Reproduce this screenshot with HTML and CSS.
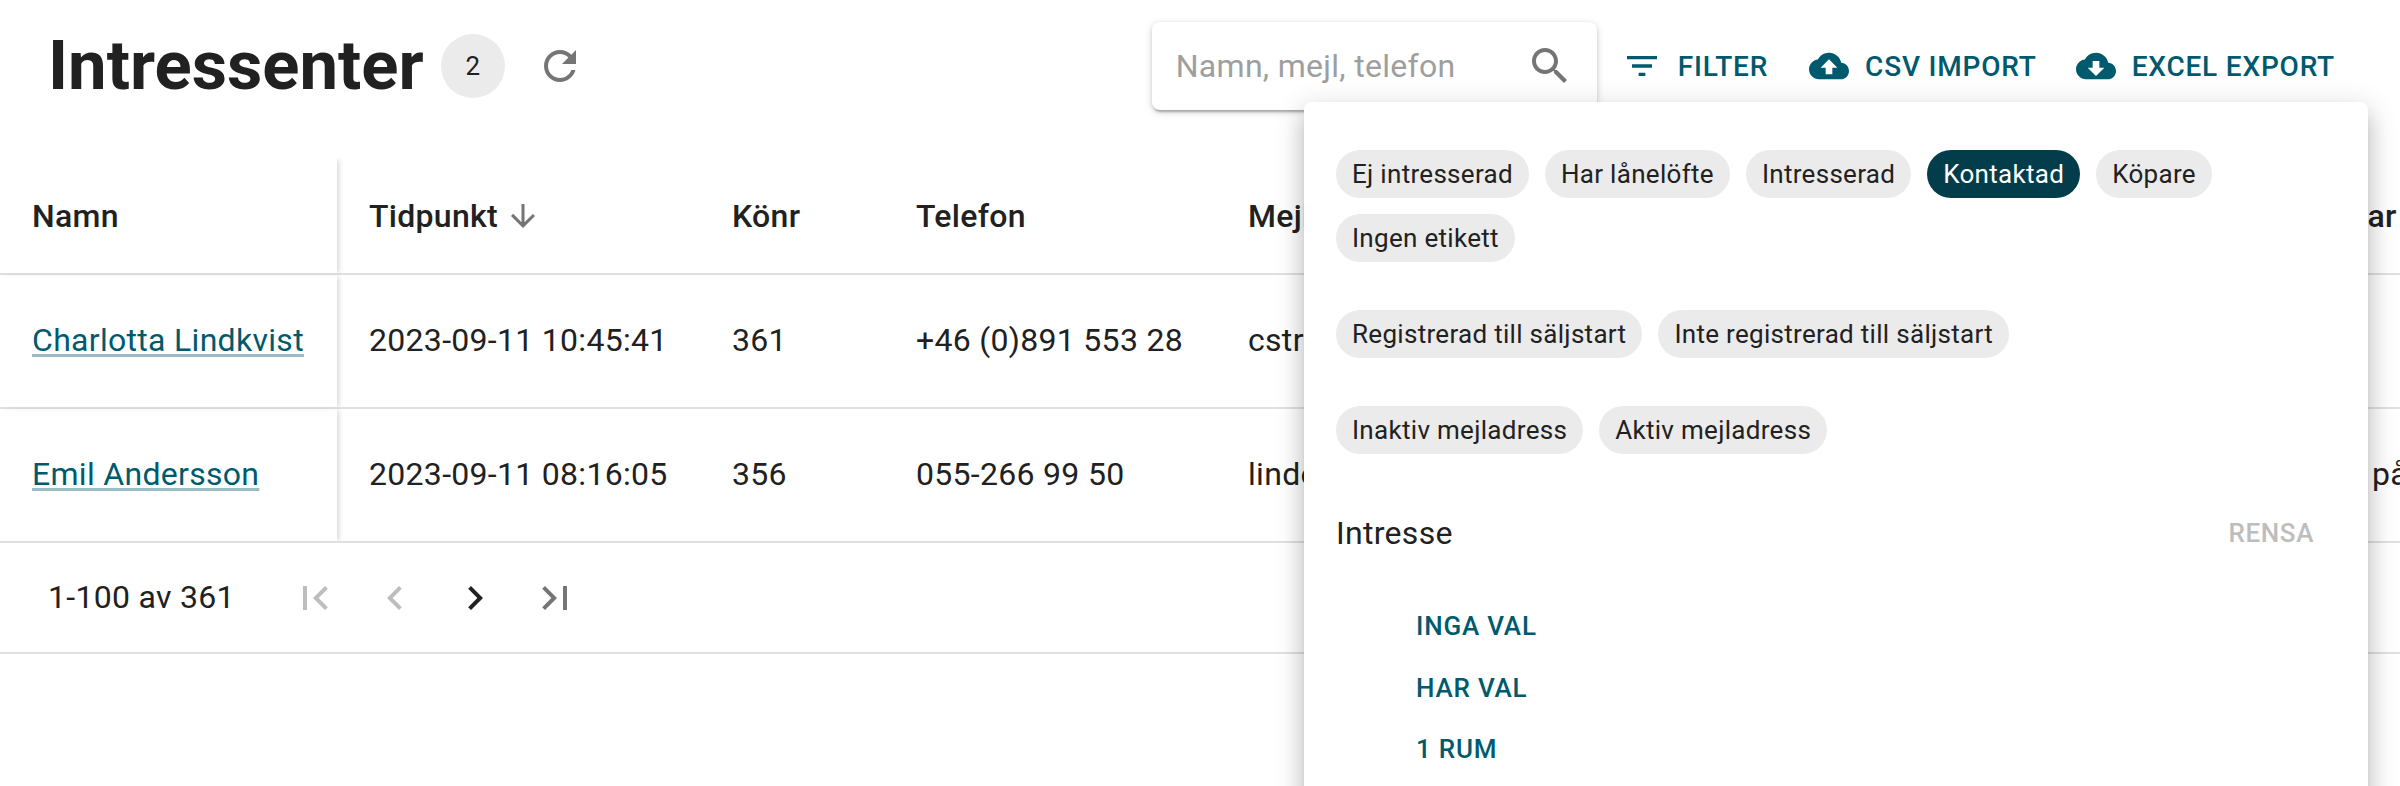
FILE: index.html
```html
<!DOCTYPE html>
<html lang="sv">
<head>
<meta charset="utf-8">
<title>Intressenter</title>
<link rel="stylesheet" href="styles.css">
</head>
<body>
<div class="page">
  <header class="toolbar">
    <h1 class="title">Intressenter</h1>
    <span class="count">2</span>
    <svg class="icon refresh" viewBox="0 0 24 24"><path d="M17.65 6.35C16.2 4.9 14.21 4 12 4c-4.42 0-7.99 3.58-7.99 8s3.57 8 7.99 8c3.73 0 6.84-2.55 7.73-6h-2.08c-.82 2.33-3.04 4-5.65 4-3.31 0-6-2.69-6-6s2.69-6 6-6c1.66 0 3.14.69 4.22 1.78L13 11h7V4l-2.35 2.35z"/></svg>
    <div class="actions">
      <div class="search">
        <span class="placeholder">Namn, mejl, telefon</span>
        <svg class="icon search-icon" viewBox="0 0 24 24"><path d="M15.5 14h-.79l-.28-.27C15.41 12.59 16 11.11 16 9.5 16 5.91 13.09 3 9.5 3S3 5.91 3 9.5 5.91 16 9.5 16c1.61 0 3.09-.59 4.23-1.57l.27.28v.79l5 4.99L20.49 19l-4.99-5zm-6 0C7.01 14 5 11.99 5 9.5S7.01 5 9.5 5 14 7.01 14 9.5 11.99 14 9.5 14z"/></svg>
      </div>
      <div class="btn btn-filter">
        <svg class="btn-icon" viewBox="0 0 24 24"><path d="M10 18h4v-2h-4v2zM3 6v2h18V6H3zm3 7h12v-2H6v2z"/></svg>
        <span>FILTER</span>
      </div>
      <div class="btn btn-csv">
        <svg class="btn-icon" viewBox="0 0 24 24"><path d="M19.35 10.04C18.67 6.59 15.64 4 12 4 9.11 4 6.6 5.64 5.35 8.04 2.34 8.36 0 10.91 0 14c0 3.31 2.69 6 6 6h13c2.76 0 5-2.24 5-5 0-2.64-2.05-4.78-4.65-4.96zM14 13v4h-4v-4H7l5-5 5 5h-3z"/></svg>
        <span>CSV IMPORT</span>
      </div>
      <div class="btn btn-excel">
        <svg class="btn-icon" viewBox="0 0 24 24"><path d="M19.35 10.04C18.67 6.59 15.64 4 12 4 9.11 4 6.6 5.64 5.35 8.04 2.34 8.36 0 10.91 0 14c0 3.31 2.69 6 6 6h13c2.76 0 5-2.24 5-5 0-2.64-2.05-4.78-4.65-4.96zM17 13l-5 5-5-5h3V9h4v4h3z"/></svg>
        <span>EXCEL EXPORT</span>
      </div>
    </div>
  </header>

  <div class="table-wrap">
    <table class="table">
      <colgroup>
        <col class="w-name"><col class="w-time"><col class="w-gender"><col class="w-phone"><col class="w-mail"><col class="w-note">
      </colgroup>
      <thead>
        <tr>
          <th class="sticky">Namn</th>
          <th><span class="sort">Tidpunkt<svg class="sort-icon" viewBox="0 0 24 24"><path d="M20 12l-1.41-1.41L13 16.17V4h-2v12.17l-5.58-5.59L4 12l8 8 8-8z"/></svg></span></th>
          <th>Könr</th>
          <th>Telefon</th>
          <th>Mejl</th>
          <th>Kommentar</th>
        </tr>
      </thead>
      <tbody>
        <tr>
          <td class="sticky"><a class="link" href="#">Charlotta Lindkvist</a></td>
          <td>2023-09-11 10:45:41</td>
          <td>361</td>
          <td>+46 (0)891 553 28</td>
          <td>cstrom@example.se</td>
          <td></td>
        </tr>
        <tr>
          <td class="sticky"><a class="link" href="#">Emil Andersson</a></td>
          <td>2023-09-11 08:16:05</td>
          <td>356</td>
          <td>055-266 99 50</td>
          <td>linde@example.se</td>
          <td>Bostaden på Storgatan</td>
        </tr>
      </tbody>
    </table>
  </div>

  <footer class="pager">
    <span class="range">1-100 av 361</span>
    <div class="pager-icons">
      <svg class="icon muted" viewBox="0 0 24 24"><path d="M18.41 16.59 13.82 12l4.59-4.59L17 6l-6 6 6 6zM6 6h2v12H6z"/></svg>
      <svg class="icon muted" viewBox="0 0 24 24"><path d="M15.41 7.41 14 6l-6 6 6 6 1.41-1.41L10.83 12z"/></svg>
      <svg class="icon strong" viewBox="0 0 24 24"><path d="M10 6 8.59 7.41 13.17 12l-4.58 4.59L10 18l6-6z"/></svg>
      <svg class="icon" viewBox="0 0 24 24"><path d="M5.59 7.41 10.18 12l-4.59 4.59L7 18l6-6-6-6zM16 6h2v12h-2z"/></svg>
    </div>
  </footer>

  <aside class="panel">
    <div class="chips">
      <span class="chip">Ej intresserad</span>
      <span class="chip">Har lånelöfte</span>
      <span class="chip">Intresserad</span>
      <span class="chip chip-on">Kontaktad</span>
      <span class="chip">Köpare</span>
      <span class="chip">Ingen etikett</span>
    </div>
    <div class="chips">
      <span class="chip">Registrerad till säljstart</span>
      <span class="chip">Inte registrerad till säljstart</span>
    </div>
    <div class="chips">
      <span class="chip">Inaktiv mejladress</span>
      <span class="chip">Aktiv mejladress</span>
    </div>
    <div class="section-head">
      <span class="section-title">Intresse</span>
      <span class="clear">RENSA</span>
    </div>
    <ul class="options">
      <li>INGA VAL</li>
      <li>HAR VAL</li>
      <li>1 RUM</li>
      <li>2 RUM</li>
    </ul>
  </aside>
</div>
</body>
</html>
```
FILE: styles.css
```css
* { box-sizing: border-box; }
html, body { margin: 0; height: 100%; overflow: hidden; background: #fff; }
body { font-family: Roboto, "Liberation Sans", sans-serif; color: #212121; }
.page { position: relative; width: 2400px; height: 786px; overflow: hidden; }

.toolbar { display: flex; align-items: center; height: 132px; margin-bottom: 26px; padding-left: 48px; }
.title { margin: 0; font-size: 68.8px; font-weight: 700; line-height: 72px; color: #212121; }
.count { display: flex; align-items: center; justify-content: center; width: 64px; height: 64px; margin-left: 17px; border-radius: 50%; background: #ebebeb; font-size: 26px; }
.icon { display: block; width: 48px; height: 48px; fill: #757575; flex: none; }
.refresh { margin-left: 31px; }

.actions { display: flex; align-items: center; margin-left: auto; padding-right: 65px; }
.search { display: flex; align-items: center; justify-content: space-between; width: 445px; height: 88px; padding: 0 23px 0 24px; border-radius: 8px; background: #fff; box-shadow: 0 4px 2px -2px rgba(0,0,0,.2), 0 2px 4px 0 rgba(0,0,0,.14), 0 2px 10px 0 rgba(0,0,0,.12); }
.placeholder { font-size: 32px; letter-spacing: .3px; color: #9e9e9e; }
.btn { display: flex; align-items: center; gap: 16px; font-size: 28px; font-weight: 500; letter-spacing: .8px; color: #005a6e; white-space: nowrap; }
.btn-icon { display: block; width: 40px; height: 40px; fill: #005a6e; flex: none; }
.btn-filter { margin-left: 25px; }
.btn-csv { margin-left: 41px; }
.btn-excel { margin-left: 39px; }

.table-wrap { overflow: hidden; }
.table { border-collapse: separate; border-spacing: 0; table-layout: fixed; width: 2400px; }
.w-name { width: 337px; }
.w-time { width: 363px; }
.w-gender { width: 184px; }
.w-phone { width: 332px; }
.w-mail { width: 978px; }
.w-note { width: 206px; }
th, td { padding: 0 0 0 32px; text-align: left; white-space: nowrap; overflow: hidden; border-bottom: 2px solid #e0e0e0; font-size: 32px; letter-spacing: .3px; }
th { height: 117px; font-weight: 500; }
td { height: 134px; padding-bottom: 2px; }
.sticky { box-shadow: 4px 0 5px -2px rgba(0,0,0,.16); }
.sort { display: inline-flex; align-items: center; gap: 7px; }
.sort-icon { display: block; width: 36px; height: 36px; fill: #757575; }
.link { color: #005a6e; text-decoration: underline; text-decoration-color: rgba(0,90,110,.4); text-decoration-thickness: 3px; text-underline-offset: 3px; }

.pager { display: flex; align-items: center; height: 111px; padding: 0 0 2px 48px; border-bottom: 2px solid #e0e0e0; font-size: 32px; letter-spacing: .3px; }
.range { width: 243px; }
.pager-icons { display: flex; gap: 32px; padding-top: 2px; }
.muted { fill: #bdbdbd; }
.strong { fill: #212121; }

.panel { position: absolute; left: 1304px; top: 102px; width: 1064px; height: 900px; padding: 48px 32px 0; border-radius: 8px; background: #fff; box-shadow: 0 10px 10px -6px rgba(0,0,0,.2), 0 16px 20px 2px rgba(0,0,0,.14), 0 6px 28px 4px rgba(0,0,0,.12); }
.chips { display: flex; flex-wrap: wrap; gap: 16px; margin-bottom: 48px; }
.chip { display: flex; align-items: center; height: 48px; padding: 0 16px; border-radius: 24px; background: #ebebeb; font-size: 26px; letter-spacing: .3px; }
.chip-on { background: #033c4b; color: #fff; }
.section-head { display: flex; align-items: center; justify-content: space-between; padding-right: 22px; margin-top: 60px; }
.section-title { font-size: 32px; letter-spacing: .3px; }
.clear { font-size: 26px; font-weight: 500; letter-spacing: .6px; color: #bdbdbd; }
.options { list-style: none; margin: 44px 0 0; padding: 0 0 0 80px; }
.options li { height: 61.5px; line-height: 61.5px; font-size: 26px; font-weight: 500; letter-spacing: .8px; color: #005a6e; }
```
